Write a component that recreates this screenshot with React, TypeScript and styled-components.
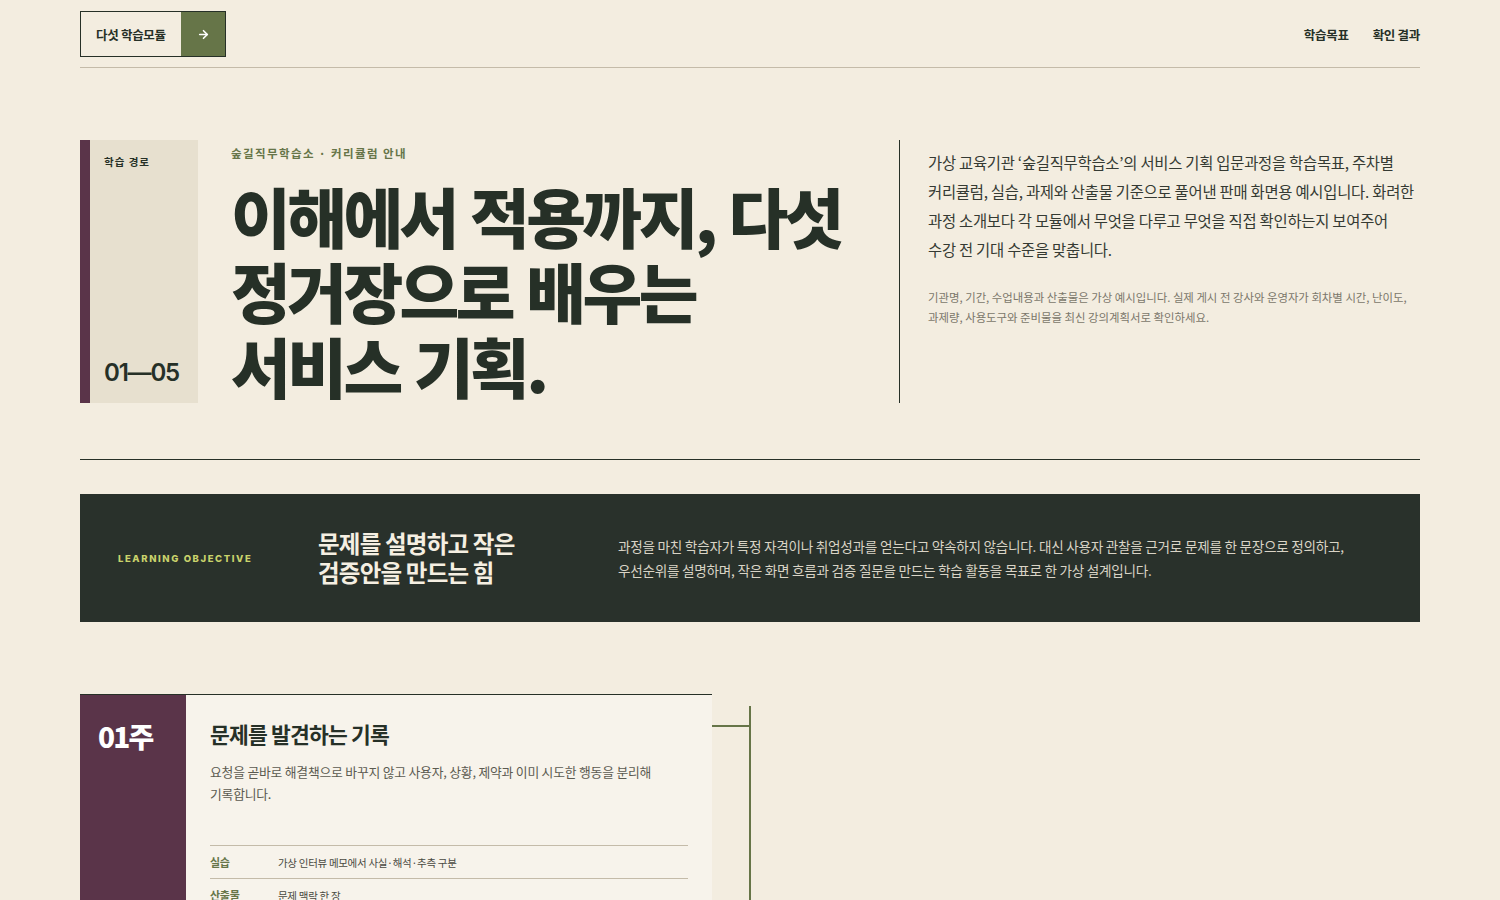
import styled, { createGlobalStyle } from 'styled-components';
import { ArrowRight } from 'lucide-react';
import { FC } from 'react';

const COLORS = {
  page: '#f3ede0',
  ink: '#263027',
  band: '#29312b',
  olive: '#667548',
  plum: '#5a3449',
  panel: '#e7e0cf',
  card: '#f7f3eb',
  rule: '#c4bba9',
  muted: '#7b776b',
  lime: '#c9d36b',
};

const GlobalStyle = createGlobalStyle`
  * { box-sizing: border-box; }
  body {
    margin: 0;
    background: ${COLORS.page};
    color: ${COLORS.ink};
    font-family: "Noto Sans CJK KR", "Noto Sans", sans-serif;
  }
`;

const Page = styled.div`
  padding: 0 80px 80px;
`;

const Header = styled.header`
  display: flex;
  justify-content: space-between;
  align-items: center;
  padding: 11px 0 10px;
  border-bottom: 1px solid ${COLORS.rule};
`;

const ModuleButton = styled.button`
  display: flex;
  align-items: stretch;
  height: 46px;
  padding: 0;
  border: 1px solid ${COLORS.ink};
  background: transparent;
  font-family: inherit;
  cursor: pointer;
`;

const ModuleLabel = styled.span`
  display: flex;
  align-items: center;
  width: 100px;
  padding-left: 15px;
  font-size: 12.5px;
  font-weight: 700;
  color: ${COLORS.ink};
  letter-spacing: -0.3px;
`;

const ModuleArrow = styled.span`
  display: flex;
  align-items: center;
  justify-content: center;
  width: 44px;
  background: ${COLORS.olive};
  color: #fff;
`;

const Nav = styled.nav`
  display: flex;
  gap: 24px;
`;

const NavLink = styled.a`
  font-size: 12.5px;
  font-weight: 700;
  color: ${COLORS.ink};
  text-decoration: none;
  letter-spacing: -0.3px;
`;

const Hero = styled.section`
  display: grid;
  grid-template-columns: 118px 1fr 521px;
  margin-top: 72px;
  height: 263px;
`;

const PathPanel = styled.div`
  display: flex;
  flex-direction: column;
  justify-content: space-between;
  background: ${COLORS.panel};
  border-left: 10px solid ${COLORS.plum};
  padding: 14px 14px 16px;
`;

const PathLabel = styled.span`
  font-size: 10.5px;
  font-weight: 700;
  letter-spacing: 1px;
`;

const PathRange = styled.span`
  font-family: Inter, "Noto Sans", sans-serif;
  font-size: 24px;
  font-weight: 600;
  letter-spacing: -1.2px;
`;

const TitleBlock = styled.div`
  padding-left: 33px;
`;

const Eyebrow = styled.p`
  margin: 5px 0 0;
  font-size: 11.5px;
  font-weight: 700;
  letter-spacing: 1.4px;
  color: ${COLORS.olive};
`;

const Headline = styled.h1`
  margin: 17px 0 0;
  font-size: 65px;
  line-height: 75px;
  font-weight: 900;
  letter-spacing: -3.6px;
  word-spacing: 3px;
  color: ${COLORS.ink};
`;

const Intro = styled.div`
  border-left: 1px solid ${COLORS.ink};
  padding: 8px 0 0 28px;
`;

const Lead = styled.p`
  margin: 0;
  font-size: 15.4px;
  line-height: 29px;
  letter-spacing: -0.25px;
  white-space: nowrap;
  color: #353a33;
`;

const Note = styled.p`
  margin: 23px 0 0;
  font-size: 11.4px;
  line-height: 20px;
  letter-spacing: 0;
  white-space: nowrap;
  color: ${COLORS.muted};
`;

const Divider = styled.hr`
  margin: 56px 0 34px;
  border: 0;
  border-top: 1px solid ${COLORS.ink};
`;

const Objective = styled.section`
  display: grid;
  grid-template-columns: 200px 300px 1fr;
  align-items: center;
  height: 128px;
  padding: 0 38px;
  background: ${COLORS.band};
`;

const ObjectiveTag = styled.span`
  font-family: Inter, "Noto Sans", sans-serif;
  font-size: 9.5px;
  font-weight: 800;
  letter-spacing: 1.6px;
  color: ${COLORS.lime};
`;

const ObjectiveTitle = styled.h2`
  margin: 0;
  font-size: 23.5px;
  line-height: 29px;
  font-weight: 700;
  letter-spacing: -0.8px;
  color: #f5efe2;
`;

const ObjectiveText = styled.p`
  margin: 0;
  font-size: 13.6px;
  line-height: 24px;
  letter-spacing: -0.25px;
  white-space: nowrap;
  color: #d9d4c6;
`;

const Timeline = styled.section`
  display: grid;
  grid-template-columns: 1fr 76px 1fr;
  margin-top: 72px;
`;

const Spine = styled.div<{ $start: boolean }>`
  position: relative;
  grid-column: 2;
  &::before {
    content: '';
    position: absolute;
    left: 37px;
    top: ${(p) => (p.$start ? '12px' : '0')};
    bottom: 0;
    width: 2px;
    background: ${COLORS.olive};
  }
`;

const Connector = styled.span<{ $side: 'left' | 'right' }>`
  position: absolute;
  top: 31px;
  height: 2px;
  width: 38px;
  background: ${COLORS.olive};
  ${(p) => (p.$side === 'left' ? 'left: 0;' : 'right: 0;')}
`;

const WeekCard = styled.article<{ $col: number }>`
  grid-column: ${(p) => p.$col};
  display: grid;
  grid-template-columns: 106px 1fr;
  border-top: 1px solid ${COLORS.ink};
  background: ${COLORS.card};
  margin-bottom: 40px;
`;

const WeekBadge = styled.div`
  background: ${COLORS.plum};
  color: #fff;
  padding: 24px 18px;
  font-size: 28px;
  font-weight: 900;
  letter-spacing: -1.8px;
  line-height: 34px;
`;

const WeekBody = styled.div`
  padding: 24px 24px 28px;
`;

const WeekTitle = styled.h3`
  margin: 0;
  font-size: 21.5px;
  line-height: 30px;
  font-weight: 700;
  letter-spacing: -0.8px;
`;

const WeekText = styled.p`
  margin: 12px 0 40px;
  max-width: 445px;
  font-size: 12.8px;
  line-height: 22px;
  letter-spacing: -0.2px;
  color: #5b5a50;
`;

const DetailRow = styled.div`
  display: grid;
  grid-template-columns: 68px 1fr;
  align-items: center;
  height: 33px;
  border-top: 1px solid ${COLORS.rule};
  font-size: 10.5px;
  letter-spacing: -0.3px;
`;

const DetailKey = styled.span`
  font-size: 11px;
  font-weight: 700;
  color: ${COLORS.olive};
`;

const DetailValue = styled.span`
  color: #4a4a42;
`;

type Week = {
  no: string;
  title: string;
  text: string;
  details: [string, string][];
};

const WEEKS: Week[] = [
  {
    no: '01주',
    title: '문제를 발견하는 기록',
    text: '요청을 곧바로 해결책으로 바꾸지 않고 사용자, 상황, 제약과 이미 시도한 행동을 분리해 기록합니다.',
    details: [
      ['실습', '가상 인터뷰 메모에서 사실·해석·추측 구분'],
      ['산출물', '문제 맥락 한 장'],
      ['확인', '관찰과 해석이 섞이지 않았는지 점검'],
    ],
  },
  {
    no: '02주',
    title: '문제를 한 문장으로',
    text: '기록한 관찰을 묶어 누가, 언제, 무엇 때문에 어려운지 한 문장으로 정의합니다.',
    details: [
      ['실습', '문제 정의 문장 세 가지 비교'],
      ['산출물', '문제 정의서'],
      ['확인', '해결책이 문장에 섞이지 않았는지 점검'],
    ],
  },
];

const WeekItem: FC<{ week: Week; index: number }> = ({ week, index }) => {
  const left = index % 2 === 0;
  return (
    <>
      {!left && <Spine $start={false}><Connector $side="right" /></Spine>}
      <WeekCard $col={left ? 1 : 3}>
        <WeekBadge>{week.no}</WeekBadge>
        <WeekBody>
          <WeekTitle>{week.title}</WeekTitle>
          <WeekText>{week.text}</WeekText>
          {week.details.map(([k, v]) => (
            <DetailRow key={k}>
              <DetailKey>{k}</DetailKey>
              <DetailValue>{v}</DetailValue>
            </DetailRow>
          ))}
        </WeekBody>
      </WeekCard>
      {left && <Spine $start={index === 0}><Connector $side="left" /></Spine>}
      {left && <div />}
    </>
  );
};

export default function App() {
  return (
    <Page>
      <GlobalStyle />
      <Header>
        <ModuleButton>
          <ModuleLabel>다섯 학습모듈</ModuleLabel>
          <ModuleArrow>
            <ArrowRight size={13} strokeWidth={3} />
          </ModuleArrow>
        </ModuleButton>
        <Nav>
          <NavLink href="#goal">학습목표</NavLink>
          <NavLink href="#result">확인 결과</NavLink>
        </Nav>
      </Header>

      <Hero>
        <PathPanel>
          <PathLabel>학습 경로</PathLabel>
          <PathRange>01—05</PathRange>
        </PathPanel>
        <TitleBlock>
          <Eyebrow>숲길직무학습소 · 커리큘럼 안내</Eyebrow>
          <Headline>
            이해에서 적용까지, 다섯
            <br />
            정거장으로 배우는
            <br />
            서비스 기획.
          </Headline>
        </TitleBlock>
        <Intro>
          <Lead>
            가상 교육기관 ‘숲길직무학습소’의 서비스 기획 입문과정을 학습목표, 주차별
            <br />
            커리큘럼, 실습, 과제와 산출물 기준으로 풀어낸 판매 화면용 예시입니다. 화려한
            <br />
            과정 소개보다 각 모듈에서 무엇을 다루고 무엇을 직접 확인하는지 보여주어
            <br />
            수강 전 기대 수준을 맞춥니다.
          </Lead>
          <Note>
            기관명, 기간, 수업내용과 산출물은 가상 예시입니다. 실제 게시 전 강사와 운영자가 회차별 시간, 난이도,
            <br />
            과제량, 사용도구와 준비물을 최신 강의계획서로 확인하세요.
          </Note>
        </Intro>
      </Hero>

      <Divider />

      <Objective id="goal">
        <ObjectiveTag>LEARNING OBJECTIVE</ObjectiveTag>
        <ObjectiveTitle>
          문제를 설명하고 작은
          <br />
          검증안을 만드는 힘
        </ObjectiveTitle>
        <ObjectiveText>
          과정을 마친 학습자가 특정 자격이나 취업성과를 얻는다고 약속하지 않습니다. 대신 사용자 관찰을 근거로 문제를 한 문장으로 정의하고,
          <br />
          우선순위를 설명하며, 작은 화면 흐름과 검증 질문을 만드는 학습 활동을 목표로 한 가상 설계입니다.
        </ObjectiveText>
      </Objective>

      <Timeline>
        {WEEKS.map((w, i) => (
          <WeekItem key={w.no} week={w} index={i} />
        ))}
      </Timeline>
    </Page>
  );
}
